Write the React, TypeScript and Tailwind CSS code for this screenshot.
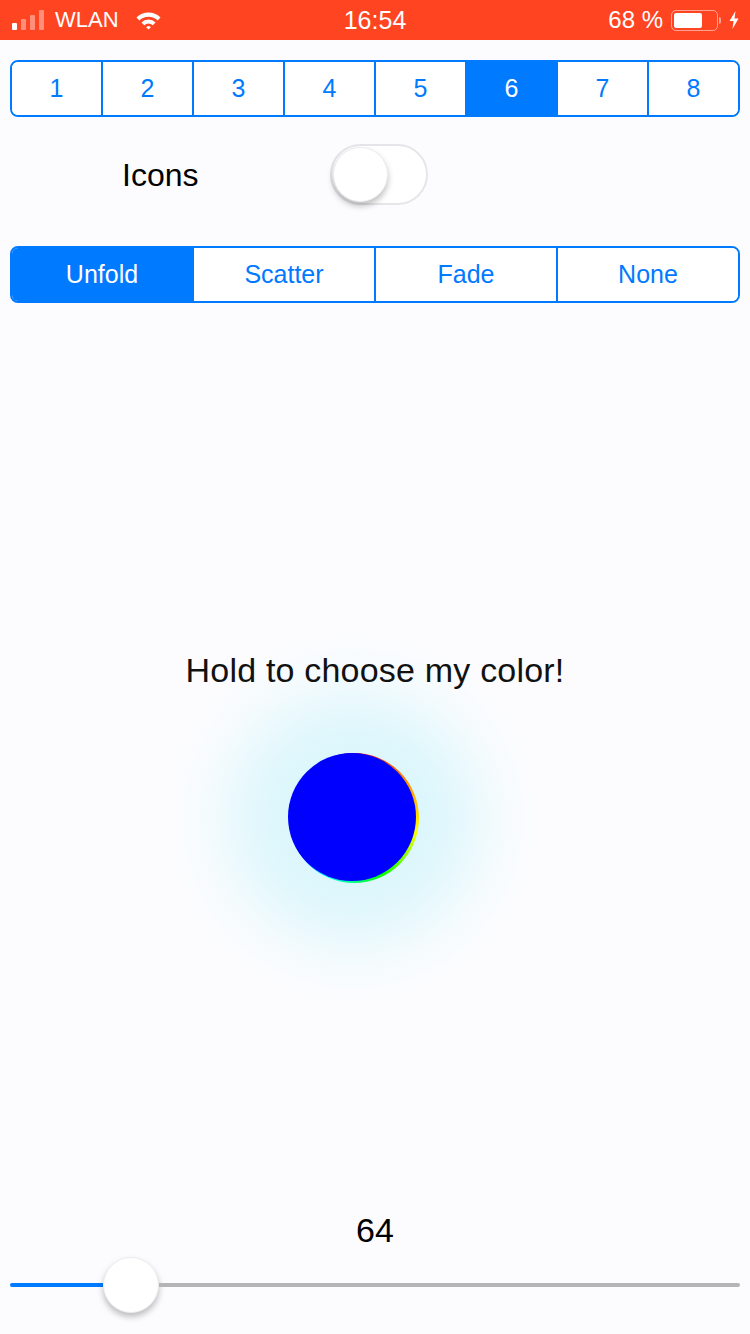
import React from 'react'

const numbers = ['1', '2', '3', '4', '5', '6', '7', '8']
const modes = ['Unfold', 'Scatter', 'Fade', 'None']

function StatusBar() {
  return (
    <div className="h-[40px] bg-[#ff4422] text-white grid grid-cols-3 items-center">
      <div className="flex items-center pl-[12px]">
        <svg width="33" height="22" viewBox="0 0 33 22">
          <rect x="0" y="14" width="5" height="7" rx="1" fill="#fff" />
          <rect x="9" y="10" width="5" height="11" rx="1" fill="#fff" fillOpacity="0.4" />
          <rect x="18" y="6" width="5" height="15" rx="1" fill="#fff" fillOpacity="0.4" />
          <rect x="27" y="1" width="5" height="20" rx="1" fill="#fff" fillOpacity="0.4" />
        </svg>
        <span className="ml-[10px] text-[22px] leading-none">WLAN</span>
        <svg className="ml-[16px]" width="27" height="19" viewBox="0 0 27 19">
          <path d="M1.5 6.5 A17 17 0 0 1 25.5 6.5 L22.6 9.5 A13 13 0 0 0 4.4 9.5 Z" fill="#fff" />
          <path d="M6.4 11.4 A10 10 0 0 1 20.6 11.4 L17.7 14.3 A6 6 0 0 0 9.3 14.3 Z" fill="#fff" />
          <path d="M11.2 16.2 A3.3 3.3 0 0 1 15.8 16.2 L13.5 18.6 Z" fill="#fff" />
        </svg>
      </div>
      <div className="text-center text-[25px] leading-none font-medium">16:54</div>
      <div className="flex items-center justify-end pr-[11px]">
        <span className="text-[24px] leading-none">68 %</span>
        <div className="ml-[8px] w-[47px] h-[21px] rounded-[5px] border-[1.5px] border-white/50 p-[2px] flex">
          <div className="w-[28px] h-full bg-white rounded-[2px]" />
        </div>
        <div className="ml-[1px] w-[2px] h-[7px] bg-white/50 rounded-r-sm" />
        <svg className="ml-[8px]" width="10" height="18" viewBox="0 0 10 18">
          <path d="M6.5 0 L0.5 10 H4.5 L3.5 18 L9.5 7.5 H5.5 Z" fill="#fff" />
        </svg>
      </div>
    </div>
  )
}

function Segmented({ items, active }: { items: string[]; active: number }) {
  return (
    <div className="flex h-[57px] border-2 border-[#007aff] rounded-lg overflow-hidden">
      {items.map((item, i) => (
        <div
          key={item}
          className={
            'flex-1 flex items-center justify-center text-[25px] ' +
            (i > 0 ? 'border-l-2 border-[#007aff] ' : '') +
            (i === active ? 'bg-[#007aff] text-white' : 'bg-white text-[#007aff]')
          }
        >
          {item}
        </div>
      ))}
    </div>
  )
}

export default function App() {
  return (
    <div className="w-[750px] h-[1334px] bg-[#fcfcfe] font-['Liberation_Sans',Arial,sans-serif] overflow-hidden">
      <StatusBar />

      <div className="px-[10px] pt-[20px]">
        <Segmented items={numbers} active={5} />
      </div>

      <div className="flex items-center mt-[27px] h-[61px] px-[10px]">
        <div className="w-[320px] pl-[112px] text-[32px] text-black">Icons</div>
        <div className="w-[98px] h-[61px] rounded-full border-2 border-[#e6e6ea] bg-white flex items-center p-[1px]">
          <div className="w-[55px] h-[55px] rounded-full bg-white border border-[#ececef] shadow-[0_4px_6px_rgba(0,0,0,0.25)]" />
        </div>
      </div>

      <div className="px-[10px] mt-[41px]">
        <Segmented items={modes} active={0} />
      </div>

      <div className="mt-[325px] h-[380px] flex flex-col items-center bg-[radial-gradient(circle_185px_at_353px_190px,rgba(208,245,252,1),rgba(218,246,252,0.8)_50%,rgba(238,250,253,0.5)_80%,rgba(252,252,254,0))]">
        <div className="mt-[22px] h-[40px] leading-[40px] text-[34px] text-[#111] tracking-[0.2px]">Hold to choose my color!</div>
        <div className="mt-[63px] ml-[-44px] w-[131px] h-[130px] relative">
          <div className="absolute left-[1px] top-0 w-[130px] h-[130px] rounded-full bg-[conic-gradient(from_0deg,#ff0000,#ff8800,#ffff00,#00ff00,#00ffff,#0000ff,#ff00ff,#ff0000)]" />
          <div className="absolute left-0 top-0 w-[128px] h-[128px] rounded-full bg-[#0000ff]" />
        </div>
      </div>

      <div className="mt-[202px] h-[40px] leading-[40px] text-center text-[34px] text-black">64</div>

      <div className="mt-[7px] mx-[10px] h-[56px] flex items-center">
        <div className="w-[93px] h-[4px] rounded-l-full bg-[#007aff]" />
        <div className="w-[56px] h-[56px] rounded-full bg-white border border-[#ececef] shadow-[0_4px_6px_rgba(0,0,0,0.25)]" />
        <div className="flex-1 h-[4px] rounded-r-full bg-[#b5b5b5]" />
      </div>
    </div>
  )
}
